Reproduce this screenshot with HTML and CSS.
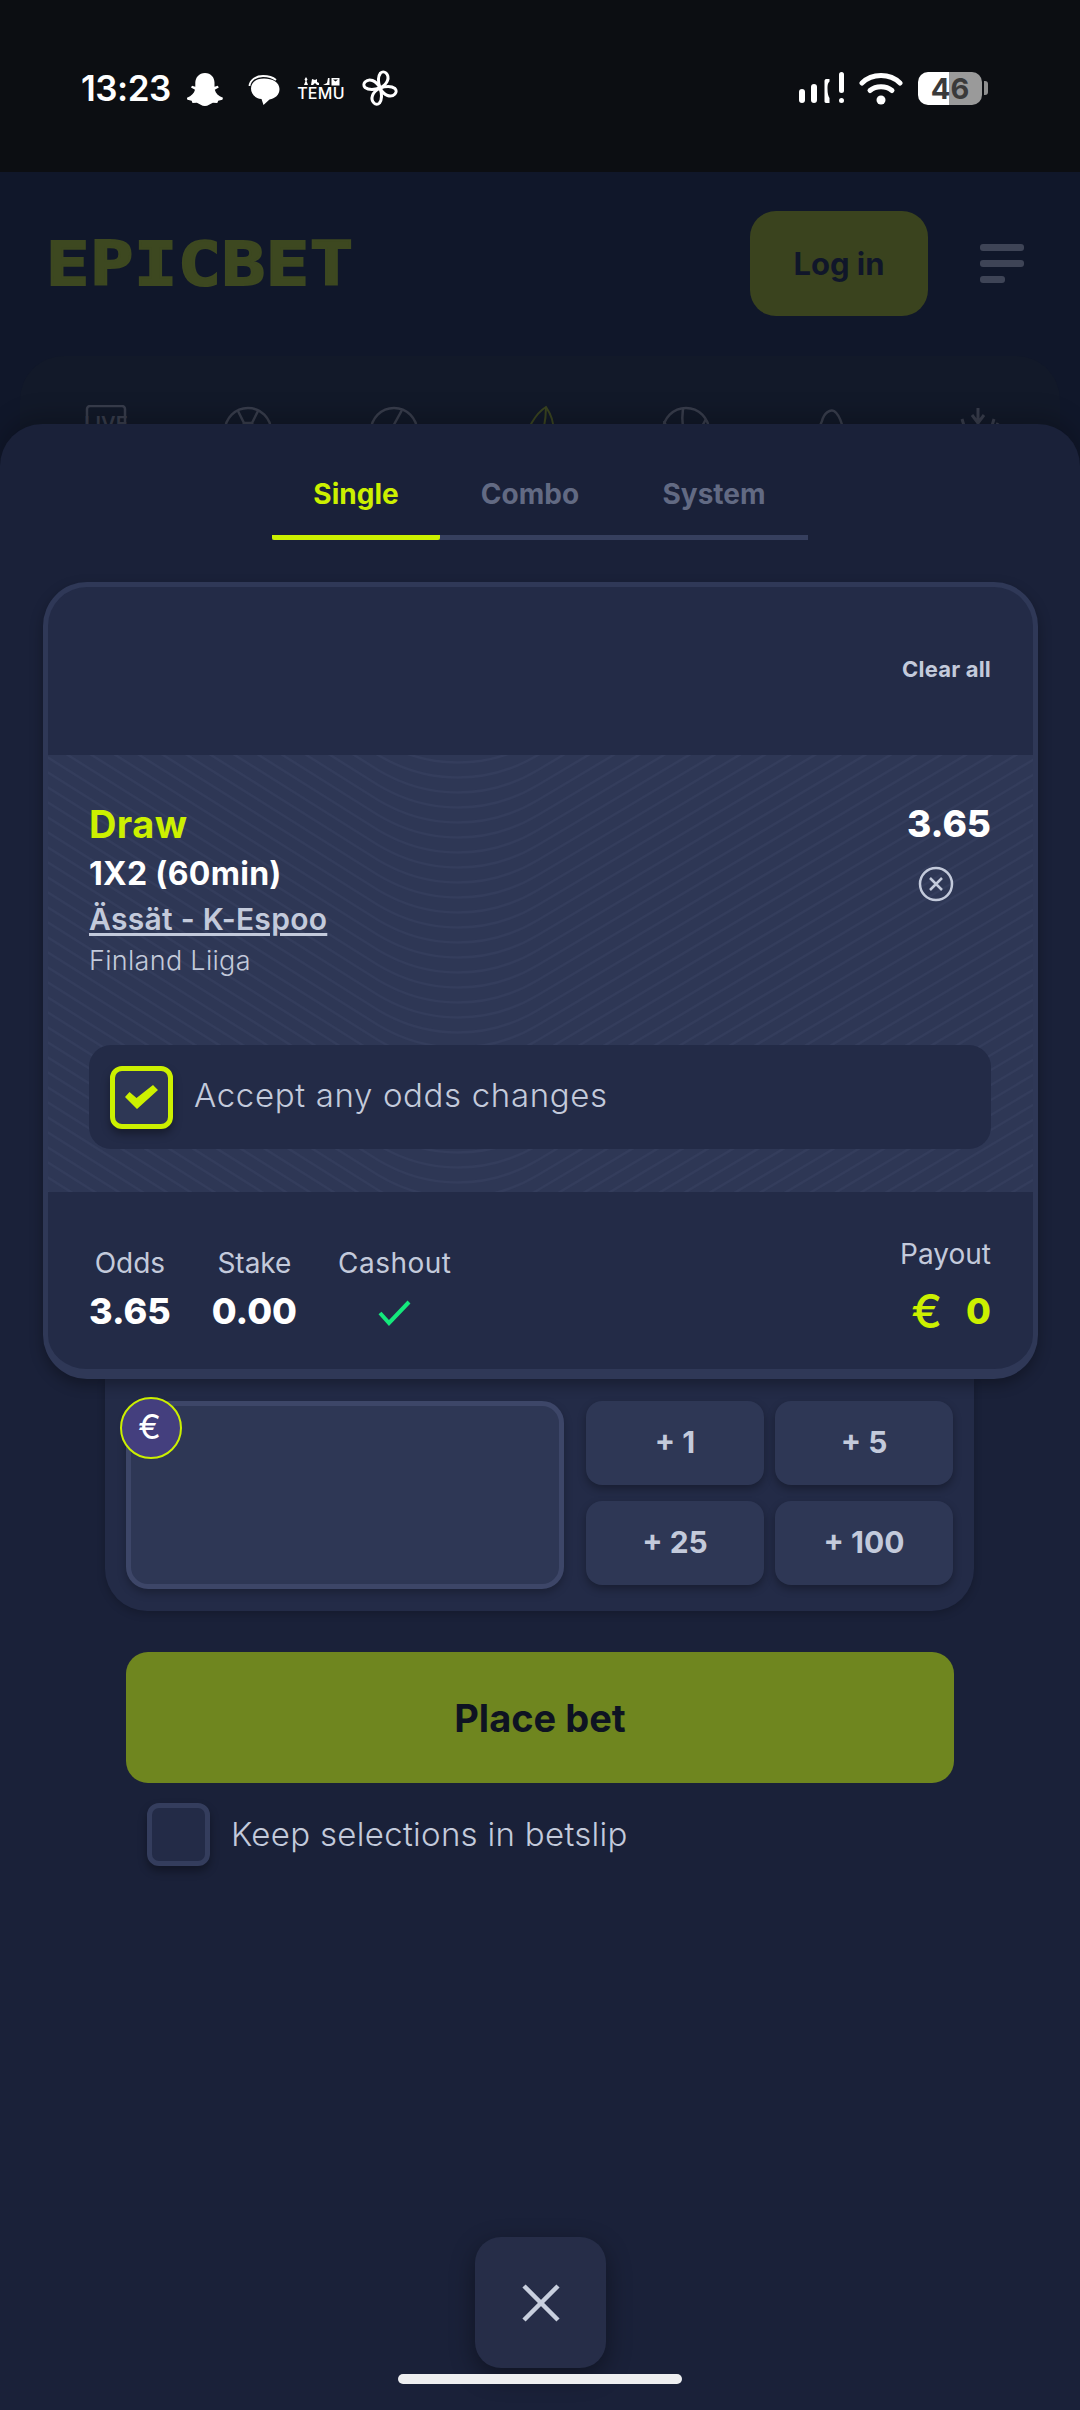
FILE: index.html
```html
<!DOCTYPE html>
<html lang="en">
<head>
<meta charset="utf-8">
<title>Epicbet betslip</title>
<link rel="stylesheet" href="styles.css">
</head>
<body>
<div class="status">
  <div class="status-left">
    <span class="time">13:23</span>
    <svg class="i-ghost" viewBox="0 0 36 33"><path fill="#fff" d="M18 0c6 0 9.500 4.500 9.500 9.500v4.200l3.300-.9 1 1.700-4 2.300c.9 3.500 3.400 6.300 8.200 8l-.6 2-4.200.9-.9 2.300-4.400-.3c-2.800 1-4.800 3.300-8 3.300s-5.200-2.300-8-3.300l-4.400.3-.9-2.300-4.200-.9-.6-2c4.800-1.700 7.300-4.500 8.200-8l-4-2.300 1-1.700 3.300.9V9.500C8.500 4.500 12 0 18 0z"/></svg>
    <svg class="i-bubble" viewBox="0 0 32 30"><path fill="none" stroke="#fff" stroke-width="1.800" d="M1.500 11C2 5 8 1 15 1c6 0 10 1.500 13 4"/><path fill="#fff" d="M16 3.500c8.500 0 15.500 4 15.500 10.500 0 6-4.500 9.500-10 10.500L15.500 30l-2-6C6.500 23 3 18.500 3 13.500 3 7.500 8 3.500 16 3.500z"/></svg>
    <div class="temu">
      <svg class="i-temu" viewBox="0 0 38 9"><path fill="#fff" d="M2 8l1.500-4-1-1.500L4 0l1.500 2.500-1 1.500L6 8zM10 2l3 1 2-1v3l2 1v2h-2l-2-2-2 2h-2zM21 8l4-2 1-5h1.500v7zM29.500 1h8v7.500h-8zM31 2.500l2.500 2 2.500-2z"/></svg>
      <span class="temu-word">TEMU</span>
    </div>
    <svg class="i-pin" viewBox="0 0 36 36">
      <defs><path id="petal" d="M18 18C16 12 15.500 7 18.500 3c1.500-1.500 4-1.500 5.500 0 4 4 2 11-6 15z"/></defs>
      <g fill="none" stroke="#fff" stroke-width="3" stroke-linejoin="round">
        <use href="#petal"/>
        <use href="#petal" transform="rotate(90 18 18)"/>
        <use href="#petal" transform="rotate(180 18 18)"/>
        <use href="#petal" transform="rotate(270 18 18)"/>
      </g>
    </svg>
  </div>
  <div class="status-right">
    <svg class="i-signal" viewBox="0 0 46 33"><g fill="#fff"><rect x="0" y="17" width="6" height="14" rx="3"/><rect x="12" y="12" width="6" height="19" rx="3"/><path d="M27 7h3.500v2.500c-1.200 1-2 2.500-2 7 0 5 .8 8 2 9.500V31H27c-.8 0-1.500-.8-1.500-1.500V9c0-1 .7-2 1.500-2z"/><rect x="40" y="0" width="5" height="21" rx="2.500"/><rect x="40" y="26" width="5" height="5" rx="2.500"/></g></svg>
    <svg class="i-wifi" viewBox="0 0 44 33"><g fill="none" stroke="#fff" stroke-linecap="round" stroke-width="5"><path d="M3 11C13 1 31 1 41 11"/><path d="M11 18.500c6-5 16-5 22 0"/></g><circle cx="22" cy="28" r="4.500" fill="#fff"/></svg>
    <div class="battery"><span class="battery-num">46</span></div>
    <span class="battery-tip"></span>
  </div>
</div>

<header class="header">
  <span class="logo">EPICBET</span>
  <div class="header-actions">
    <div class="login">Log in</div>
    <div class="burger"><span class="bar"></span><span class="bar"></span><span class="bar bar-short"></span></div>
  </div>
</header>

<nav class="sports">
  <svg class="sport" viewBox="0 0 60 60"><g fill="none" stroke="#383d4c" stroke-width="2.500"><path d="M3 40a26 26 0 0 1 10-17"/><rect x="15" y="1" width="38" height="35" rx="3"/></g><text x="34" y="26" class="live-text">LIVE</text></svg>
  <svg class="sport" viewBox="0 0 60 60"><g fill="none" stroke="#383d4c" stroke-width="2.500"><circle cx="30" cy="26" r="23"/><path d="M20 6l6 12h8l6-12M26 18l-5 14M34 18l5 14M21 26l9 4 9-4"/></g></svg>
  <svg class="sport" viewBox="0 0 60 60"><g fill="none" stroke="#383d4c" stroke-width="2.500"><circle cx="30" cy="26" r="23"/><path d="M38 5L16 45"/></g></svg>
  <svg class="sport" viewBox="0 0 60 60"><g fill="none" stroke="#3a4420" stroke-width="2"><path d="M12 44C16 24 26 8 36 2c4 6 8 14 7 22-1 8-3 14-6 20"/><path d="M36 2c0 14-3 28-9 42"/></g></svg>
  <svg class="sport" viewBox="0 0 60 60"><g fill="none" stroke="#383d4c" stroke-width="2.500"><circle cx="30" cy="26" r="23"/><path d="M27 3c-2 14 0 28 6 44M50 14L36 40M8 16l8 20"/></g></svg>
  <svg class="sport" viewBox="0 0 60 60"><g fill="none" stroke="#383d4c" stroke-width="2.500"><path d="M16 44c2-12-2-16 4-28 2-8 8-12 12-10 6 4 10 14 12 38"/><ellipse cx="29" cy="27" rx="3.500" ry="6"/></g></svg>
  <svg class="sport" viewBox="0 0 60 60"><g fill="none" stroke="#383d4c" stroke-width="3"><path d="M30 3v41M24 10l6 8 6-8M10 20l8 14 7 3M50 18l-8 16-7 3M6 30h10M54 28H44M14 14l3 10M46 14l-3 10"/></g></svg>
</nav>

<main class="sheet">
  <div class="tabs">
    <div class="tab tab-active">Single</div>
    <div class="tab tab-combo">Combo</div>
    <div class="tab tab-system">System</div>
  </div>

  <section class="card">
    <div class="card-head"><span class="clear">Clear all</span></div>
    <div class="selection">
      <svg class="pattern" aria-hidden="true" width="985" height="437" viewBox="0 0 985 437">
        <defs>
          <path id="w1" d="M-20 -250 L330 -30 C380 0 440 0 490 -30 L1010 -340"/>
          <g id="w2"><use href="#w1"/><use href="#w1" y="15"/></g>
          <g id="w4"><use href="#w2"/><use href="#w2" y="30"/></g>
          <g id="w8"><use href="#w4"/><use href="#w4" y="60"/></g>
          <g id="w16"><use href="#w8"/><use href="#w8" y="120"/></g>
          <g id="w32"><use href="#w16"/><use href="#w16" y="240"/></g>
          <g id="w64"><use href="#w32"/><use href="#w32" y="480"/></g>
        </defs>
        <use href="#w64" class="pattern-lines"/>
      </svg>
      <div class="sel-top">
        <div class="sel-info">
          <div class="sel-name">Draw</div>
          <div class="sel-market">1X2 (60min)</div>
          <a class="sel-match">Ässät - K-Espoo</a>
          <div class="sel-league">Finland Liiga</div>
        </div>
        <div class="sel-side">
          <div class="num sel-odds">3.65</div>
          <svg class="i-remove" viewBox="0 0 36 36"><circle cx="18" cy="18" r="16" fill="none" stroke="#c3cadb" stroke-width="2.500"/><path d="M12 12l12 12M24 12L12 24" stroke="#c3cadb" stroke-width="2.500" fill="none"/></svg>
        </div>
      </div>
      <div class="accept">
        <div class="check check-on">
          <svg class="i-check" viewBox="0 0 33 24"><path fill="#ccf000" d="M0 12l4.500-5 7 6L28 0l5 5L12 24z"/></svg>
        </div>
        <span class="accept-label">Accept any odds changes</span>
      </div>
    </div>
    <div class="summary">
      <div class="stats">
        <div class="stat"><span class="stat-label">Odds</span><span class="num stat-val">3.65</span></div>
        <div class="stat"><span class="stat-label">Stake</span><span class="num stat-val">0.00</span></div>
        <div class="stat"><span class="stat-label label-wide">Cashout</span><svg class="i-cash" viewBox="0 0 34 26"><path d="M2 13l9 10L31 2" fill="none" stroke="#14e87c" stroke-width="4"/></svg></div>
      </div>
      <div class="payout">
        <span class="stat-label">Payout</span>
        <div class="num payout-val"><span class="euro">€</span><span>0</span></div>
      </div>
    </div>
  </section>

  <section class="stake">
    <div class="stake-input"><span class="euro-badge">€</span></div>
    <div class="quick">
      <div class="quick-btn">+ 1</div>
      <div class="quick-btn">+ 5</div>
      <div class="quick-btn">+ 25</div>
      <div class="quick-btn">+ 100</div>
    </div>
  </section>

  <div class="place">Place bet</div>

  <div class="keep">
    <div class="check check-off"></div>
    <span class="keep-label">Keep selections in betslip</span>
  </div>

  <div class="close">
    <svg class="i-close" viewBox="0 0 38 38"><path d="M2 2l34 34M36 2L2 36" stroke="#c8cfde" stroke-width="4.500" fill="none"/></svg>
  </div>
</main>
<div class="homebar"></div>
</body>
</html>
```
FILE: styles.css
```css
* { box-sizing: border-box; }
html, body { margin: 0; padding: 0; }
body {
  position: relative;
  width: 1080px;
  height: 2410px;
  overflow: hidden;
  background: #10172a;
  font-family: Inter, "Noto Sans", sans-serif;
  color: #c3cadb;
}
svg { display: block; }

/* status bar */
.status {
  height: 172px;
  background: #0c0e12;
  display: flex;
  justify-content: space-between;
  align-items: flex-start;
  padding: 70px 92px 0 81px;
}
.status-left, .status-right { display: flex; align-items: center; height: 36px; }
.time { color: #fff; font-size: 35px; font-weight: 600; width: 106px; line-height: 36px; letter-spacing: -0.5px; }
.i-ghost { width: 36px; height: 33px; margin-top: 2px; }
.i-bubble { width: 32px; height: 30px; margin: 4px 0 0 25px; }
.temu { width: 38px; margin-left: 22px; display: flex; flex-direction: column; align-items: center; gap: 1px; }
.i-temu { width: 38px; height: 9px; }
.temu-word { color: #fff; font-size: 16px; line-height: 13px; font-weight: 500; letter-spacing: .3px; }
.i-pin { width: 36px; height: 36px; margin-left: 22px; }
.i-signal { width: 46px; height: 33px; }
.i-wifi { width: 44px; height: 33px; margin-left: 14px; }
.battery {
  width: 64px;
  height: 33px;
  margin-left: 15px;
  border-radius: 10px;
  background: linear-gradient(90deg, #fff 0 31px, #9a9a9a 31px);
  display: flex;
  align-items: center;
  justify-content: center;
}
.battery-num { color: #3a3a3a; font-size: 29px; font-weight: 700; line-height: 33px; }
.battery-tip { width: 4px; height: 14px; margin-left: 2px; background: #8f8f8f; border-radius: 0 3px 3px 0; }

/* dimmed page header */
.header {
  height: 184px;
  padding: 39px 56px 40px 46px;
  display: flex;
  justify-content: space-between;
  align-items: center;
}
.logo {
  font-family: "DejaVu Sans Mono", monospace;
  font-weight: 700;
  font-size: 60px;
  line-height: 60px;
  letter-spacing: .5px;
  color: #3d4820;
  -webkit-text-stroke: 2px #3d4820;
  transform: scaleX(1.2);
  transform-origin: left center;
}
.header-actions { display: flex; align-items: center; gap: 52px; }
.login {
  width: 178px;
  height: 105px;
  border-radius: 26px;
  background: #3a431e;
  color: #10162a;
  font-size: 31px;
  font-weight: 700;
  display: flex;
  align-items: center;
  justify-content: center;
}
.burger { width: 44px; display: flex; flex-direction: column; gap: 9px; }
.bar { height: 7px; border-radius: 3px; background: #3e4456; }
.bar-short { width: 25px; }

.sports {
  margin: 0 20px;
  height: 120px;
  padding: 49px 52px 0 52px;
  border-radius: 44px 44px 0 0;
  background: #121929;
  display: flex;
  justify-content: space-between;
}
.sport { width: 60px; height: 60px; flex: none; }
.live-text { fill: #383d4c; font-size: 20px; font-weight: 600; text-anchor: middle; font-family: Inter, sans-serif; }

/* betslip sheet */
.sheet {
  position: absolute;
  top: 424px;
  left: 0;
  right: 0;
  bottom: 0;
  background: #1a2139;
  border-radius: 42px 42px 0 0;
  box-shadow: 0 -8px 24px rgba(0, 0, 0, .22);
  display: flex;
  flex-direction: column;
}
.tabs { display: flex; width: 536px; margin: 42px 0 0 272px; height: 74px; border-bottom: 5px solid #363f5e; }
.tab { height: 74px; padding-top: 8px; font-size: 28px; line-height: 40px; font-weight: 700; text-align: center; color: #626a83; }
.tab-active { width: 168px; color: #ccf000; border-bottom: 5px solid #ccf000; border-radius: 0 0 2px 2px; }
.tab-combo { width: 180px; }
.tab-system { width: 188px; }

.card {
  position: relative;
  z-index: 1;
  margin: 42px 0 0 43px;
  width: 995px;
  height: 797px;
  border: 5px solid #2f3857;
  border-bottom-width: 10px;
  border-radius: 44px;
  background: #232b47;
  overflow: hidden;
  box-shadow: 0 6px 14px rgba(0, 0, 0, .3);
}
.card-head { height: 168px; padding: 67px 42px 0 0; text-align: right; }
.clear { font-size: 22px; line-height: 30px; font-weight: 700; letter-spacing: .2px; }

.selection {
  position: relative;
  height: 437px;
  padding: 46px 42px 0 41px;
  background: #2e3755;
  display: flex;
  flex-direction: column;
}
.pattern { position: absolute; left: 0; top: 0; }
.pattern-lines { fill: none; stroke: #343d5c; stroke-width: 2.500px; }
.sel-top { position: relative; display: flex; justify-content: space-between; }
.sel-info { display: flex; flex-direction: column; align-items: flex-start; }
.sel-name { color: #ccf000; font-size: 38px; line-height: 46px; font-weight: 700; letter-spacing: .4px; }
.sel-market { color: #fff; font-size: 32px; line-height: 50px; margin-top: 2px; font-weight: 700; letter-spacing: .3px; }
.sel-match { color: #c3cadb; font-size: 30px; line-height: 40px; font-weight: 600; text-decoration: underline; text-decoration-thickness: 3px; text-underline-offset: 3px; letter-spacing: .3px; }
.sel-league { color: #c3cadb; font-size: 27px; line-height: 44px; font-weight: 300; letter-spacing: .3px; }
.sel-side { display: flex; flex-direction: column; align-items: flex-end; }
.num { font-weight: 800; color: #fff; }
.sel-odds { font-size: 37px; line-height: 46px; }
.i-remove { width: 36px; height: 36px; margin: 19px 37px 0 0; }

.accept {
  position: relative;
  margin-top: 62px;
  height: 104px;
  padding-left: 21px;
  background: #232b47;
  border-radius: 22px;
  display: flex;
  align-items: center;
  gap: 21px;
}
.check { width: 63px; height: 63px; border-radius: 12px; background: #2e3755; display: flex; align-items: center; justify-content: center; box-shadow: 0 5px 8px rgba(0, 0, 0, .35); }
.check-on { border: 5px solid #ccf000; }
.check-off { border: 5px solid #343d5d; background: #232b47; }
.i-check { width: 33px; height: 24px; }
.accept-label { font-size: 33px; font-weight: 300; color: #c3cadb; letter-spacing: .65px; padding-bottom: 5px; }

.summary {
  height: 171px;
  padding: 0 42px 0 41px;
  display: flex;
  justify-content: space-between;
}
.stats { display: flex; gap: 41px; padding-top: 51px; }
.stat { display: flex; flex-direction: column; align-items: center; gap: 6px; }
.stat-label { font-size: 28px; line-height: 40px; font-weight: 400; color: #c3cadb; }
.label-wide { letter-spacing: .5px; }
.stat-val { font-size: 36px; line-height: 44px; }
.i-cash { width: 34px; height: 26px; margin-top: 11px; }
.payout { display: flex; flex-direction: column; align-items: flex-end; padding-top: 42px; gap: 15px; }
.payout-val { display: flex; align-items: center; gap: 24px; color: #ccf000; font-size: 36px; line-height: 44px; }
.euro { font-weight: 500; font-size: 46px; line-height: 44px; }

/* stake */
.stake {
  width: 869px;
  height: 232px;
  margin-left: 105px;
  padding: 22px 21px 0 21px;
  background: #232b47;
  border-radius: 0 0 42px 42px;
  display: flex;
  gap: 22px;
  box-shadow: 0 3px 8px rgba(0, 0, 0, .2);
}
.stake-input {
  position: relative;
  width: 441px;
  height: 188px;
  background: #2e3755;
  border: 5px solid #3d4668;
  border-radius: 22px;
  box-shadow: 0 4px 8px rgba(0, 0, 0, .25);
}
.euro-badge {
  position: absolute;
  left: -11px;
  top: -9px;
  width: 62px;
  height: 62px;
  padding: 0 3px 4px 0;
  border-radius: 50%;
  border: 2px solid #ccf000;
  background: #443f7e;
  color: #fff;
  font-size: 34px;
  font-weight: 400;
  display: flex;
  align-items: center;
  justify-content: center;
}
.quick { display: grid; grid-template-columns: 178px 178px; grid-auto-rows: 84px; column-gap: 11px; row-gap: 16px; }
.quick-btn {
  padding-bottom: 3px;
  background: #2e3755;
  border-radius: 16px;
  color: #c3cadb;
  font-size: 30px;
  font-weight: 700;
  display: flex;
  align-items: center;
  justify-content: center;
  box-shadow: 0 4px 8px rgba(0, 0, 0, .3);
}

.place {
  width: 828px;
  height: 131px;
  margin: 41px 0 0 126px;
  background: #6f861f;
  border-radius: 22px;
  color: #0e1322;
  font-size: 38px;
  font-weight: 700;
  display: flex;
  align-items: center;
  justify-content: center;
}
.keep { display: flex; align-items: center; gap: 21px; margin: 20px 0 0 147px; }
.keep-label { font-size: 33px; font-weight: 300; color: #c3cadb; padding-bottom: 2px; letter-spacing: .3px; }

.close {
  width: 131px;
  height: 131px;
  margin: auto 0 42px 475px;
  background: #262d48;
  border-radius: 26px;
  display: flex;
  align-items: center;
  justify-content: center;
  box-shadow: 0 8px 24px rgba(0, 0, 0, .4);
}
.i-close { width: 38px; height: 38px; }
.homebar {
  position: absolute;
  left: 398px;
  top: 2374px;
  width: 284px;
  height: 10px;
  border-radius: 5px;
  background: #eeeff1;
}
```
